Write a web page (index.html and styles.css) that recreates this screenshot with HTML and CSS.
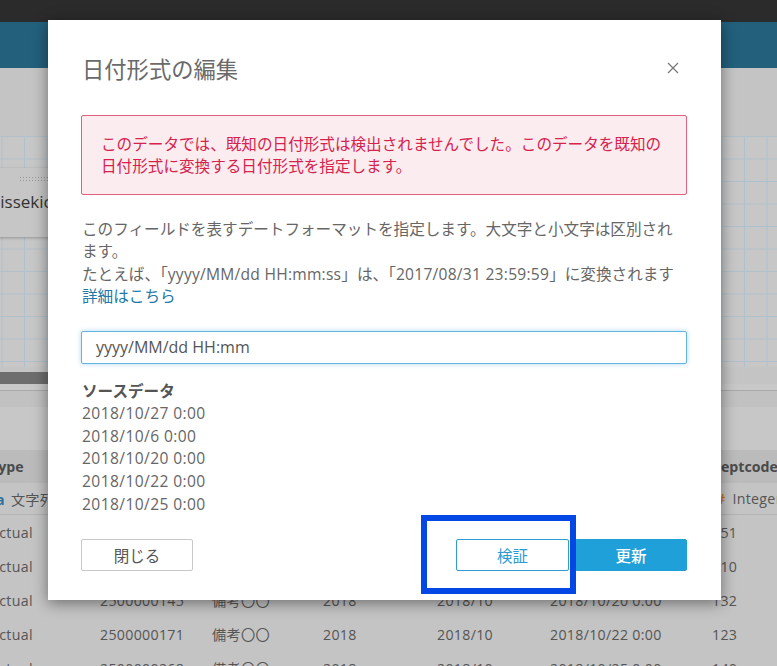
FILE: index.html
```html
<!DOCTYPE html>
<html lang="ja">
<head>
<meta charset="utf-8">
<title>日付形式の編集</title>
<link rel="stylesheet" href="styles.css">
</head>
<body>
<div class="page">
  <div class="topbar"></div>
  <div class="band"></div>
  <div class="workspace">
    <div class="grid">
      <div class="card">
        <div class="handle"></div>
        <div class="card-label">jissekicount</div>
      </div>
    </div>
  </div>
  <div class="hscroll"><div class="thumb"></div></div>
  <div class="tabs"><div class="tabs-top"></div><div class="tabs-body"></div></div>
  <div class="table">
    <div class="trow thead">
      <div>Type</div><div>orderid</div><div>memo</div><div>year</div><div>month</div><div>date</div><div>deptcode</div>
    </div>
    <div class="trow ttype">
      <div><span class="ico-str">a</span>文字列</div><div>文字列</div><div>文字列</div><div>整数</div><div>文字列</div><div>日付</div><div><span class="ico-num">#</span>Integer</div>
    </div>
    <div class="trow">
      <div>Actual</div><div>2500000102</div><div>備考〇〇</div><div>2018</div><div>2018/10</div><div>2018/10/27 0:00</div><div>151</div>
    </div>
    <div class="trow">
      <div>Actual</div><div>2500000118</div><div>備考〇〇</div><div>2018</div><div>2018/10</div><div>2018/10/6 0:00</div><div>110</div>
    </div>
    <div class="trow">
      <div>Actual</div><div>2500000145</div><div>備考〇〇</div><div>2018</div><div>2018/10</div><div>2018/10/20 0:00</div><div>132</div>
    </div>
    <div class="trow">
      <div>Actual</div><div>2500000171</div><div>備考〇〇</div><div>2018</div><div>2018/10</div><div>2018/10/22 0:00</div><div>123</div>
    </div>
    <div class="trow">
      <div>Actual</div><div>2500000268</div><div>備考〇〇</div><div>2018</div><div>2018/10</div><div>2018/10/25 0:00</div><div>140</div>
    </div>
  </div>
</div>

<div class="modal">
  <div class="modal-head">
    <div class="modal-title">日付形式の編集</div>
    <div class="close" aria-label="閉じる">
      <svg width="12" height="12" viewBox="0 0 12 12"><path d="M1 1L11 11M11 1L1 11" stroke="#777" stroke-width="1.2" fill="none"/></svg>
    </div>
  </div>
  <div class="alert">このデータでは、既知の日付形式は検出されませんでした。このデータを既知の日付形式に変換する日付形式を指定します。</div>
  <div class="desc">
    このフィールドを表すデートフォーマットを指定します。大文字と小文字は区別されます。<br>
    たとえば、「<span class="latin">yyyy/MM/dd HH:mm:ss</span>」は、「<span class="latin">2017/08/31 23:59:59</span>」に変換されます<br>
    <a class="link">詳細はこちら</a>
  </div>
  <div class="input">yyyy/MM/dd HH:mm</div>
  <div class="source">
    <div class="source-title">ソースデータ</div>
    <div class="date">2018/10/27 0:00</div>
    <div class="date">2018/10/6 0:00</div>
    <div class="date">2018/10/20 0:00</div>
    <div class="date">2018/10/22 0:00</div>
    <div class="date">2018/10/25 0:00</div>
  </div>
  <div class="footer">
    <button class="btn">閉じる</button>
    <div class="btn-group">
      <button class="btn btn-verify">検証</button>
      <button class="btn btn-primary">更新</button>
    </div>
  </div>
  <div class="highlight"></div>
</div>
</body>
</html>
```
FILE: styles.css
```css
html, body {
  margin: 0;
  padding: 0;
}
body {
  width: 777px;
  height: 666px;
  overflow: hidden;
  background: #c4c4c4;
  font-family: "Open Sans", "Noto Sans CJK JP", sans-serif;
  position: relative;
}
.page {
  width: 777px;
  height: 666px;
  overflow: hidden;
}
.topbar {
  height: 22px;
  background: #2b2b2b;
}
.band {
  height: 46px;
  background: #22607c;
}
.workspace {
  height: 299px;
  padding-top: 68px;
  box-sizing: border-box;
  background: #c4c4c4;
}
.grid {
  height: 231px;
  background-color: #c7c7c7;
  background-image:
    linear-gradient(to right, #afc1cc 1px, transparent 1px),
    linear-gradient(to bottom, #afc1cc 1px, transparent 1px);
  background-size: 22.5px 22.5px;
  background-position: 1.5px 0;
  padding-top: 32px;
  box-sizing: border-box;
}
.card {
  margin-left: -14px;
  width: 130px;
  height: 69px;
  background: #c6c6c6;
  box-shadow: 0 1px 3px rgba(0, 0, 0, 0.25);
  box-sizing: border-box;
  padding-top: 8px;
}
.handle {
  margin-left: 33px;
  width: 40px;
  height: 6px;
  background-image: radial-gradient(circle, #969696 0.8px, transparent 1px);
  background-size: 3px 3px;
}
.card-label {
  margin-top: 9px;
  padding-left: 10px;
  font-size: 17px;
  color: #333;
  line-height: 22px;
}
.hscroll {
  height: 17px;
  padding-top: 5px;
  box-sizing: border-box;
  background: #c4c4c4;
}
.thumb {
  width: 300px;
  height: 12px;
  background: #6d6d6d;
}
.tabs-top {
  height: 6px;
  background: #c8c8c8;
  border-bottom: 1px solid #a9a9a9;
}
.tabs-body {
  height: 59px;
  background: linear-gradient(to bottom, #c1c1c1 0, #c1c1c1 16px, #c7c7c7 16px);
}
.table {
  font-size: 14.2px;
  color: #555;
  letter-spacing: 0.3px;
}
.trow {
  display: grid;
  grid-template-columns: 110px 112px 111px 114px 113px 162px 1fr;
  margin-left: -10px;
  align-items: center;
  height: 34px;
  white-space: nowrap;
}
.thead {
  height: 33px;
  background: #bbbbbb;
  font-weight: bold;
  color: #4a4a4a;
  letter-spacing: 0;
}
.ttype {
  height: 32px;
  border-bottom: 1px solid #b3b3b3;
  box-sizing: border-box;
}
.ico-str {
  display: inline-block;
  margin-left: 6px;
  margin-right: 6px;
  color: #2d6f9e;
  font-weight: bold;
}
.ico-num {
  display: inline-block;
  margin-left: 4px;
  margin-right: 7px;
  color: #c07a2a;
  font-weight: bold;
}

/* Modal */
.modal {
  position: absolute;
  left: 48px;
  top: 20px;
  width: 673px;
  height: 580px;
  background: #fff;
  box-shadow: 0 3px 14px rgba(0, 0, 0, 0.45);
  box-sizing: border-box;
  padding: 34px 34px 29px 33px;
  display: flex;
  flex-direction: column;
  font-size: 15.6px;
  color: #666;
}
.modal-head {
  display: flex;
  justify-content: space-between;
  align-items: center;
  height: 32px;
}
.modal-title {
  font-size: 22.3px;
  line-height: 32px;
  color: #6a6a6a;
  padding-left: 1px;
}
.close {
  width: 12px;
  height: 12px;
  margin-right: 8px;
  margin-top: -4px;
  display: flex;
}
.alert {
  margin-top: 29px;
  border: 1px solid #e1607d;
  background: #fbecef;
  border-radius: 2px;
  padding: 17px 19px;
  color: #d6224d;
  line-height: 22px;
}
.desc {
  margin-top: 23px;
  line-height: 22.4px;
  padding-left: 1px;
}
.latin {
  letter-spacing: 0.25px;
}
.link {
  color: #2278a9;
  text-decoration: none;
}
.input {
  margin-top: 23px;
  height: 33px;
  box-sizing: border-box;
  border: 1px solid #62b3e2;
  box-shadow: 0 0 5px rgba(98, 179, 226, 0.5);
  border-radius: 2px;
  padding: 0 14px;
  display: flex;
  align-items: center;
  font-size: 16px;
  color: #555;
}
.source {
  margin-top: 16px;
  line-height: 22.6px;
  padding-left: 1px;
}
.date {
  letter-spacing: 0.4px;
}
.source-title {
  font-weight: bold;
  color: #555;
}
.footer {
  margin-top: auto;
  display: flex;
  justify-content: space-between;
}
.btn-group {
  display: flex;
  gap: 6px;
}
.btn {
  height: 32px;
  width: 112px;
  box-sizing: border-box;
  border: 1px solid #c8c8c8;
  border-radius: 2px;
  background: #fff;
  font-family: "Open Sans", "Noto Sans CJK JP", sans-serif;
  font-size: 15.5px;
  color: #555;
  padding: 0;
}
.btn-verify {
  width: 113px;
  border-color: #2f9bd2;
  color: #2a9ad2;
}
.btn-primary {
  background: #1fa0d8;
  border-color: #1fa0d8;
  color: #fff;
  font-weight: 500;
}
.highlight {
  position: absolute;
  left: 373px;
  top: 495px;
  width: 155px;
  height: 79px;
  box-sizing: border-box;
  border: 6px solid #0347e4;
}
```
